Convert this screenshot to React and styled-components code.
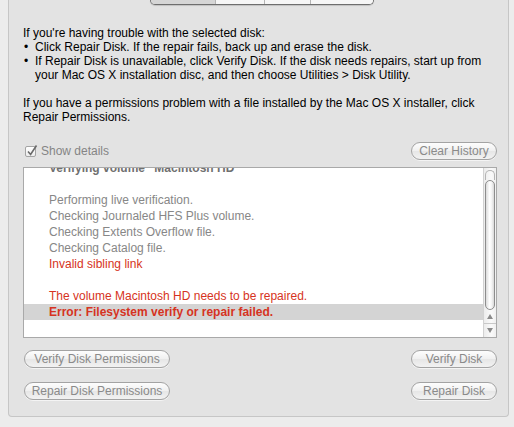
import styled, { createGlobalStyle } from 'styled-components'

const GlobalStyle = createGlobalStyle`
html, body {
	margin: 0;
	padding: 0;
	background: #ececec;
}
body {
	font-family: "Liberation Sans", Arial, sans-serif;
	font-size: 12px;
}
`

const Page = styled.div`
width: 514px;
height: 427px;
box-sizing: border-box;
padding: 0 5px 0 8px;
overflow: hidden;
`

const Panel = styled.div`
height: 417px;
box-sizing: border-box;
background: #e3e3e3;
border: 1px solid #c6c6c6;
border-top: none;
border-radius: 0 0 4px 4px;
display: flex;
flex-direction: column;
padding: 0 11px 0 14px;

& > * {
	flex-shrink: 0;
}
`

const Tabs = styled.div`
align-self: center;
display: flex;
height: 4px;
margin-left: 3px;
border: 1px solid #6e6e6e;
border-top: none;
border-radius: 0 0 5px 5px;
overflow: hidden;
box-shadow: 0 1px 1px rgba(0, 0, 0, 0.15);
`

const Tab = styled.div`
width: ${p => p.w}px;
background: ${p => (p.selected ? '#d6d6d6' : '#f6f6f6')};
border-left: ${p => (p.first ? 'none' : '1px solid #b4b4b4')};
`

const Help = styled.div`
margin-top: 21px;
color: #000;
line-height: 14px;
`

const Para = styled.p`
margin: 0 0 14px 0;
`

const BulletList = styled.ul`
list-style: none;
margin: 0;
padding: 0;
`

const Bullet = styled.li`
position: relative;
padding-left: 12px;
&::before {
	content: '•';
	position: absolute;
	left: 1px;
}
`

const DetailsBar = styled.div`
display: flex;
justify-content: space-between;
align-items: center;
margin-top: 4px;
padding-left: 2px;
`

const CheckLabel = styled.label`
display: flex;
align-items: center;
gap: 5px;
color: #858585;
`

const CheckBox = styled.span`
width: 11px;
height: 11px;
box-sizing: border-box;
border: 1px solid #a4a4a4;
border-radius: 2px;
background: linear-gradient(#ffffff, #ededed);
position: relative;

svg {
	position: absolute;
	left: 0px;
	top: -3px;
}
`

const PillButton = styled.button`
width: ${p => p.w}px;
height: 18px;
box-sizing: border-box;
border: 1px solid #a3a3a3;
border-radius: 9px;
background: linear-gradient(#fdfdfd, #f0f0f0 50%, #e6e6e6 51%, #f2f2f2);
box-shadow: 0 1px 0 rgba(255, 255, 255, 0.6);
color: #8a8a8a;
font-family: "Liberation Sans", Arial, sans-serif;
font-size: 12px;
padding: 0;
line-height: 16px;
`

const LogBox = styled.div`
margin-top: 7px;
height: 171px;
box-sizing: border-box;
background: #fff;
border: 1px solid #a9a9a9;
display: flex;
`

const LogLines = styled.div`
flex: 1;
overflow: hidden;
`

const LogScroll = styled.div`
margin-top: -8px;
`

const LogLine = styled.div`
height: 16px;
line-height: 16px;
padding-left: 25px;
white-space: nowrap;
color: ${p => (p.error ? '#d63322' : p.head ? '#707070' : '#878787')};
font-weight: ${p => (p.bold ? 'bold' : 'normal')};
background: ${p => (p.selected ? '#d4d4d4' : 'transparent')};
`

const ScrollBar = styled.div`
width: 12px;
border-left: 1px solid #d2d2d2;
background: linear-gradient(90deg, #ececec, #fafafa 60%, #f0f0f0);
display: flex;
flex-direction: column;
`

const ThumbCap = styled.div`
height: 9px;
margin: 2px 1px 0;
border: 1px solid #b4b4b4;
border-bottom: none;
border-radius: 6px 6px 0 0;
`

const Thumb = styled.div`
flex: 1;
margin: 0 1px 0 1px;
border: 1px solid #8d8d8d;
border-radius: 6px;
background: linear-gradient(90deg, #dcdcdc, #ffffff 45%, #f4f4f4 70%, #d8d8d8);
`

const Arrow = styled.div`
height: 13px;
display: flex;
align-items: center;
justify-content: center;
border-top: ${p => (p.divider ? '1px solid #c8c8c8' : 'none')};
`

const ButtonRow = styled.div`
display: flex;
justify-content: space-between;
margin-top: ${p => p.top}px;
padding-left: 1px;
`

const Check = () => (
	<svg width="12" height="13" viewBox="0 0 12 13">
		<path d="M2 7.5 L4.6 10.5 L10.5 1.5" fill="none" stroke="#6a6a6a" strokeWidth="1.6" />
	</svg>
)

const Tri = ({ up }) => (
	<svg width="6" height="5" viewBox="0 0 6 5">
		<path d={up ? 'M3 0 L6 5 L0 5 Z' : 'M0 0 L6 0 L3 5 Z'} fill="#8a8a8a" />
	</svg>
)

const log = [
	{ text: 'Verifying volume “Macintosh HD”', head: true, bold: true },
	{ text: '' },
	{ text: 'Performing live verification.' },
	{ text: 'Checking Journaled HFS Plus volume.' },
	{ text: 'Checking Extents Overflow file.' },
	{ text: 'Checking Catalog file.' },
	{ text: 'Invalid sibling link', error: true },
	{ text: '' },
	{ text: 'The volume Macintosh HD needs to be repaired.', error: true },
	{ text: 'Error: Filesystem verify or repair failed.', error: true, bold: true, selected: true },
	{ text: '' },
]

const App = () => {
	return (
		<Page>
			<GlobalStyle />
			<Panel>
				<Tabs>
					<Tab first selected w={64} />
					<Tab w={48} />
					<Tab w={45} />
					<Tab w={62} />
				</Tabs>

				<Help>
					<div>If you're having trouble with the selected disk:</div>
					<BulletList>
						<Bullet>Click Repair Disk. If the repair fails, back up and erase the disk.</Bullet>
						<Bullet>If Repair Disk is unavailable, click Verify Disk. If the disk needs repairs, start up from your Mac OS X installation disc, and then choose Utilities &gt; Disk Utility.</Bullet>
					</BulletList>
					<Para />
					<Para>If you have a permissions problem with a file installed by the Mac OS X installer, click Repair Permissions.</Para>
				</Help>

				<DetailsBar>
					<CheckLabel>
						<CheckBox><Check /></CheckBox>
						Show details
					</CheckLabel>
					<PillButton w={86}>Clear History</PillButton>
				</DetailsBar>

				<LogBox>
					<LogLines>
						<LogScroll>
							{log.map((l, i) => (
								<LogLine key={i} error={l.error} bold={l.bold} head={l.head} selected={l.selected}>
									{l.text || '\u00a0'}
								</LogLine>
							))}
						</LogScroll>
					</LogLines>
					<ScrollBar>
						<ThumbCap />
						<Thumb />
						<Arrow><Tri up /></Arrow>
						<Arrow divider><Tri /></Arrow>
					</ScrollBar>
				</LogBox>

				<ButtonRow top={12}>
					<PillButton w={146}>Verify Disk Permissions</PillButton>
					<PillButton w={86}>Verify Disk</PillButton>
				</ButtonRow>
				<ButtonRow top={14}>
					<PillButton w={146}>Repair Disk Permissions</PillButton>
					<PillButton w={86}>Repair Disk</PillButton>
				</ButtonRow>
			</Panel>
		</Page>
	)
}

export default App
